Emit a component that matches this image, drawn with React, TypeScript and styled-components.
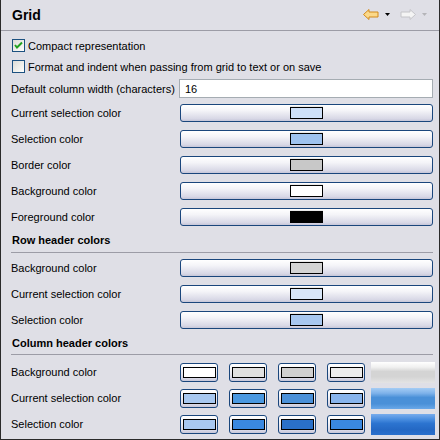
import React from "react";
import styled, { createGlobalStyle } from "styled-components";

const Global = createGlobalStyle`
  html, body { margin: 0; padding: 0; background: #dfdfe6; }
  body { font-family: "Liberation Sans", Arial, sans-serif; font-size: 11px; color: #000; }
`;

const Frame = styled.div`
  width: 440px;
  height: 440px;
  box-sizing: border-box;
  background: #dfdfe6;
  border-left: 1px solid #2a2a2a;
  border-right: 1px solid #2a2a2a;
  border-bottom: 1px solid #2a2a2a;
  display: flex;
  flex-direction: column;
  overflow: hidden;
`;

const Header = styled.div`
  height: 30px;
  border-bottom: 1px solid #9c9ca6;
  display: flex;
  align-items: center;
  justify-content: space-between;
  padding: 0 12px 0 11px;
`;

const Title = styled.div`
  font-weight: bold;
  font-size: 14px;
`;

const Nav = styled.div`
  display: flex;
  align-items: center;
  margin-top: -2px;
`;

const NavIcon = styled.svg<{ $ml?: number }>`
  display: block;
  margin-left: ${(p) => p.$ml ?? 0}px;
`;

const Content = styled.div`
  padding: 4px 6px 0 10px;
  display: flex;
  flex-direction: column;
`;

const CheckRow = styled.label`
  height: 21px;
  display: flex;
  align-items: center;
  gap: 3px;
  padding-left: 1px;
`;

const Box = styled.span`
  width: 11px;
  height: 11px;
  border: 1px solid #1c5180;
  background: linear-gradient(135deg, #dcdcd7 0%, #f4f4f0 70%, #ffffff 100%);
  display: flex;
  align-items: center;
  justify-content: center;
`;

const FieldRow = styled.div<{ $h?: number }>`
  height: ${(p) => p.$h ?? 26}px;
  display: grid;
  grid-template-columns: 169px 1fr;
  align-items: center;
`;

const Label = styled.div`
  white-space: nowrap;
`;

const Input = styled.div`
  height: 17px;
  margin-left: -1px;
  background: #fff;
  border: 1px solid #a5acb2;
  display: flex;
  align-items: center;
  padding-left: 5px;
`;

const ColorButton = styled.div`
  height: 16px;
  border: 1px solid #1a467c;
  border-radius: 3px;
  background: linear-gradient(to bottom, #ffffff 0%, #f4f4f8 35%, #d8d8e6 85%, #c6c6d8 100%);
  display: flex;
  align-items: center;
  justify-content: center;
`;

const Swatch = styled.span<{ $c: string }>`
  width: 31px;
  height: 10px;
  background: ${(p) => p.$c};
  border: 1px solid #000;
  box-shadow: 0 -1px 0 #e8e8e8;
`;

const Section = styled.div<{ $h: number; $mb: number }>`
  height: ${(p) => p.$h}px;
  line-height: 20px;
  font-weight: bold;
  border-bottom: 1px solid #9c9ca6;
  margin-bottom: ${(p) => p.$mb}px;
  padding-left: 1px;
  box-sizing: border-box;
`;

const SmallRow = styled.div`
  display: flex;
  align-items: center;
  gap: 11px;
`;

const SmallButton = styled.div`
  width: 36px;
  height: 17px;
  border: 1px solid #1a467c;
  border-radius: 3px;
  background: linear-gradient(to bottom, #ffffff 0%, #f4f4f8 35%, #d8d8e6 85%, #c6c6d8 100%);
  display: flex;
  align-items: center;
  justify-content: center;
`;

const SmallSwatch = styled.span<{ $c: string }>`
  width: 31px;
  height: 9px;
  background: ${(p) => p.$c};
  border: 1px solid #000;
`;

const Preview = styled.div<{ $g: string }>`
  width: 64px;
  height: 21px;
  margin-left: -5px;
  margin-right: -1px;
  background: ${(p) => p.$g};
`;

const Check = () => (
  <svg width="9" height="9" viewBox="0 0 9 9">
    <path d="M1 4 L3 6.5 L8 1.5" stroke="#21a121" strokeWidth="2" fill="none" />
  </svg>
);

const mainRows = [
  ["Current selection color", "#cfe0f8"],
  ["Selection color", "#9fc3ef"],
  ["Border color", "#c8c8c8"],
  ["Background color", "#ffffff"],
  ["Foreground color", "#000000"],
];

const rowHeader = [
  ["Background color", "#d4d4d4"],
  ["Current selection color", "#d8e6f8"],
  ["Selection color", "#a8c8f0"],
];

const colHeader: { label: string; colors: string[]; grad: string }[] = [
  {
    label: "Background color",
    colors: ["#ffffff", "#e0e0e0", "#d0d0d0", "#ececec"],
    grad: "linear-gradient(to bottom, #ffffff 0%, #f0f0f0 25%, #d4d4d4 45%, #d4d4d4 70%, #e4e4e4 100%)",
  },
  {
    label: "Current selection color",
    colors: ["#a8c8f0", "#4a98e0", "#4a90d8", "#88b4ec"],
    grad: "linear-gradient(to bottom, #a4ccf4 0%, #7eb2ea 25%, #4a90d8 45%, #4a90d8 75%, #6aa8e8 100%)",
  },
  {
    label: "Selection color",
    colors: ["#a8c8f0", "#3a88e0", "#2a70c8", "#3a88e0"],
    grad: "linear-gradient(to bottom, #78acec 0%, #4a8ee0 25%, #2c74d0 45%, #2468c4 75%, #2a70cc 100%)",
  },
];

export default function App() {
  return (
    <>
      <Global />
      <Frame>
        <Header>
          <Title>Grid</Title>
          <Nav>
            <NavIcon width="16" height="11" viewBox="0 0 16 11">
              <path d="M0.5 5.5 L6 0.5 L6 3 L15 3 L15 8 L6 8 L6 10.5 Z" fill="#fbd98a" stroke="#d2891a" strokeWidth="1" />
            </NavIcon>
            <NavIcon width="5" height="3" viewBox="0 0 5 3" $ml={6}>
              <path d="M0 0 L5 0 L2.5 3 Z" fill="#000" />
            </NavIcon>
            <NavIcon width="16" height="11" viewBox="0 0 16 11" $ml={10}>
              <path d="M15.5 5.5 L10 0.5 L10 3 L1 3 L1 8 L10 8 L10 10.5 Z" fill="#f4f4f4" stroke="#c4c4c8" strokeWidth="1" />
            </NavIcon>
            <NavIcon width="5" height="3" viewBox="0 0 5 3" $ml={6}>
              <path d="M0 0 L5 0 L2.5 3 Z" fill="#b4b4b8" />
            </NavIcon>
          </Nav>
        </Header>
        <Content>
          <CheckRow>
            <Box><Check /></Box>
            Compact representation
          </CheckRow>
          <CheckRow>
            <Box />
            Format and indent when passing from grid to text or on save
          </CheckRow>
          <FieldRow $h={23}>
            <Label>Default column width (characters)</Label>
            <Input>16</Input>
          </FieldRow>
          {mainRows.map(([l, c]) => (
            <FieldRow key={l}>
              <Label>{l}</Label>
              <ColorButton><Swatch $c={c} /></ColorButton>
            </FieldRow>
          ))}
          <Section $h={23} $mb={2}>Row header colors</Section>
          {rowHeader.map(([l, c]) => (
            <FieldRow key={l}>
              <Label>{l}</Label>
              <ColorButton><Swatch $c={c} /></ColorButton>
            </FieldRow>
          ))}
          <Section $h={22} $mb={4}>Column header colors</Section>
          {colHeader.map((r) => (
            <FieldRow key={r.label}>
              <Label>{r.label}</Label>
              <SmallRow>
                {r.colors.map((c, i) => (
                  <SmallButton key={i}><SmallSwatch $c={c} /></SmallButton>
                ))}
                <Preview $g={r.grad} />
              </SmallRow>
            </FieldRow>
          ))}
        </Content>
      </Frame>
    </>
  );
}
